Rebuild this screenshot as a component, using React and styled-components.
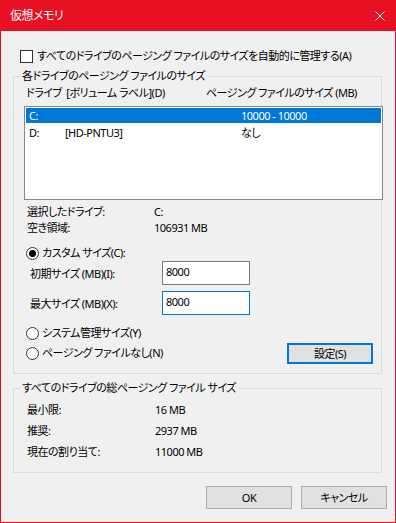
import React from 'react';
import styled, { createGlobalStyle } from 'styled-components';

const GlobalStyle = createGlobalStyle`
  body {
    margin: 0;
    background: #f0f0f0;
    font-family: "Noto Sans", "Noto Sans CJK JP", sans-serif;
    font-size: 11px;
    letter-spacing: -0.5px;
    color: #000;
    font-feature-settings: "palt";
  }
`;

const Window = styled.div`
  width: 396px;
  height: 523px;
  box-sizing: border-box;
  border: 1px solid #e81123;
  border-top: 0;
  background: #f0f0f0;
  display: flex;
  flex-direction: column;
`;
const TitleBar = styled.div`
  height: 31px;
  margin: 0 -1px;
  background: #e81123;
  color: #fff;
  display: flex;
  align-items: center;
  justify-content: space-between;
  padding: 0 11px 0 10px;
  line-height: 16px;
  font-size: 12px;
`;
const Client = styled.div`
  display: flex;
  flex-direction: column;
  padding: 17px 13px 0 12px;
`;
const CheckRow = styled.label`
  display: flex;
  align-items: center;
  gap: 4px;
  height: 16px;
  margin-left: 7px;
  line-height: 16px;
  white-space: nowrap;
`;
const CheckBox = styled.span`
  width: 13px;
  height: 13px;
  box-sizing: border-box;
  border: 1px solid #333;
  background: #fff;
`;
const Group = styled.fieldset`
  margin: ${p => p.$top}px 0 0;
  padding: 0;
  border: 1px solid #dcdcdc;
  min-width: 0;
`;
const Legend = styled.legend`
  margin-left: 6px;
  padding: 0 2px;
  line-height: 16px;
`;
const Headers = styled.div`
  display: grid;
  grid-template-columns: 180px 1fr;
  padding-left: 12px;
  margin-top: 1px;
  line-height: 16px;
  white-space: nowrap;
`;
const ListBox = styled.div`
  margin: 5px 0 0 10px;
  width: 359px;
  height: 94px;
  box-sizing: border-box;
  border: 1px solid #828790;
  background: #fff;
  padding: 1px;
  display: flex;
  flex-direction: column;
  gap: 2px;
`;
const ListRow = styled.div`
  display: grid;
  grid-template-columns: 36px 176px 1fr;
  height: 15px;
  line-height: 15px;
  padding-left: 3px;
  background: ${p => (p.$selected ? '#0078d7' : 'transparent')};
  color: ${p => (p.$selected ? '#fff' : '#000')};
`;
const InfoGrid = styled.div`
  display: grid;
  grid-template-columns: ${p => p.$col}px auto;
  row-gap: ${p => p.$gap || 0}px;
  margin-top: ${p => p.$top || 0}px;
  padding: 0 0 ${p => p.$bottom || 0}px 13px;
  line-height: ${p => p.$lh || 16}px;
`;
const RadioRow = styled.label`
  display: flex;
  align-items: center;
  gap: 3px;
  height: ${p => p.$h || 16}px;
  margin-top: ${p => p.$top || 0}px;
  padding-left: ${p => p.$left || 0}px;
  line-height: 16px;
  white-space: nowrap;
`;
const RadioCircle = styled.span`
  width: 13px;
  height: 13px;
  box-sizing: border-box;
  border: 1px solid #333;
  border-radius: 50%;
  background: #fff;
  display: flex;
  align-items: center;
  justify-content: center;
  &::after {
    content: '';
    width: 7px;
    height: 7px;
    border-radius: 50%;
    background: ${p => (p.$checked ? '#000' : 'transparent')};
  }
`;
const SizeRow = styled.div`
  display: grid;
  grid-template-columns: 132px 88px;
  align-items: center;
  height: 24px;
  margin-top: ${p => p.$top}px;
  padding-left: 16px;
`;
const SizeInput = styled.input`
  width: 88px;
  height: 24px;
  box-sizing: border-box;
  margin: 0;
  padding: 0 3px 4px;
  border: 1px solid ${p => (p.$focused ? '#0078d7' : '#7a7a7a')};
  background: #fff;
  font: inherit;
  letter-spacing: inherit;
  color: #000;
  outline: none;
`;
const BottomRow = styled.div`
  display: flex;
  justify-content: space-between;
  margin-top: 8px;
  padding: 0 8px 9px 12px;
`;
const RadioColumn = styled.div`
  display: flex;
  flex-direction: column;
`;
const Button = styled.button`
  width: 86px;
  height: ${p => p.$h || 23}px;
  margin-top: ${p => p.$top || 0}px;
  box-sizing: border-box;
  padding: 0;
  border: ${p => (p.$default ? '2px solid #0078d7' : '1px solid #adadad')};
  background: #e1e1e1;
  font: inherit;
  letter-spacing: inherit;
  color: #000;
  line-height: 16px;
`;
const Footer = styled.div`
  display: flex;
  justify-content: flex-end;
  gap: 9px;
  margin: 13px -5px 0 0;
`;

const CloseIcon = () => (
  <svg width="10" height="10" viewBox="0 0 10 10">
    <path d="M0.5 0.5 L9.5 9.5 M9.5 0.5 L0.5 9.5" stroke="#fff" strokeWidth="1" />
  </svg>
);

export default function App() {
  return (
    <>
      <GlobalStyle />
      <Window>
        <TitleBar>
          <span>仮想メモリ</span>
          <CloseIcon />
        </TitleBar>
        <Client>
          <CheckRow>
            <CheckBox />
            すべてのドライブのページング ファイルのサイズを自動的に管理する(A)
          </CheckRow>

          <Group $top={4}>
            <Legend>各ドライブのページング ファイルのサイズ</Legend>
            <Headers>
              <span>ドライブ&nbsp; [ボリューム ラベル](D)</span>
              <span>ページング ファイルのサイズ (MB)</span>
            </Headers>
            <ListBox>
              <ListRow $selected>
                <span>C:</span>
                <span></span>
                <span>10000 - 10000</span>
              </ListRow>
              <ListRow>
                <span>D:</span>
                <span>[HD-PNTU3]</span>
                <span>なし</span>
              </ListRow>
            </ListBox>
            <InfoGrid $col={127} $top={4}>
              <span>選択したドライブ:</span>
              <span>C:</span>
              <span>空き領域:</span>
              <span>106931 MB</span>
            </InfoGrid>
            <RadioRow $top={9} $left={12}>
              <RadioCircle $checked />
              カスタム サイズ(C):
            </RadioRow>
            <SizeRow $top={0}>
              <span>初期サイズ (MB)(I):</span>
              <SizeInput readOnly value="8000" />
            </SizeRow>
            <SizeRow $top={6}>
              <span>最大サイズ (MB)(X):</span>
              <SizeInput readOnly value="8000" $focused />
            </SizeRow>
            <BottomRow>
              <RadioColumn>
                <RadioRow $h={20}>
                  <RadioCircle />
                  システム管理サイズ(Y)
                </RadioRow>
                <RadioRow $h={20}>
                  <RadioCircle />
                  ページング ファイルなし(N)
                </RadioRow>
              </RadioColumn>
              <Button $default $top={20} $h={21}>設定(S)</Button>
            </BottomRow>
          </Group>

          <Group $top={6}>
            <Legend>すべてのドライブの総ページング ファイル サイズ</Legend>
            <InfoGrid $col={128} $top={4} $gap={1} $lh={20} $bottom={10}>
              <span>最小限:</span>
              <span>16 MB</span>
              <span>推奨:</span>
              <span>2937 MB</span>
              <span>現在の割り当て:</span>
              <span>11000 MB</span>
            </InfoGrid>
          </Group>

          <Footer>
            <Button>OK</Button>
            <Button>キャンセル</Button>
          </Footer>
        </Client>
      </Window>
    </>
  );
}
